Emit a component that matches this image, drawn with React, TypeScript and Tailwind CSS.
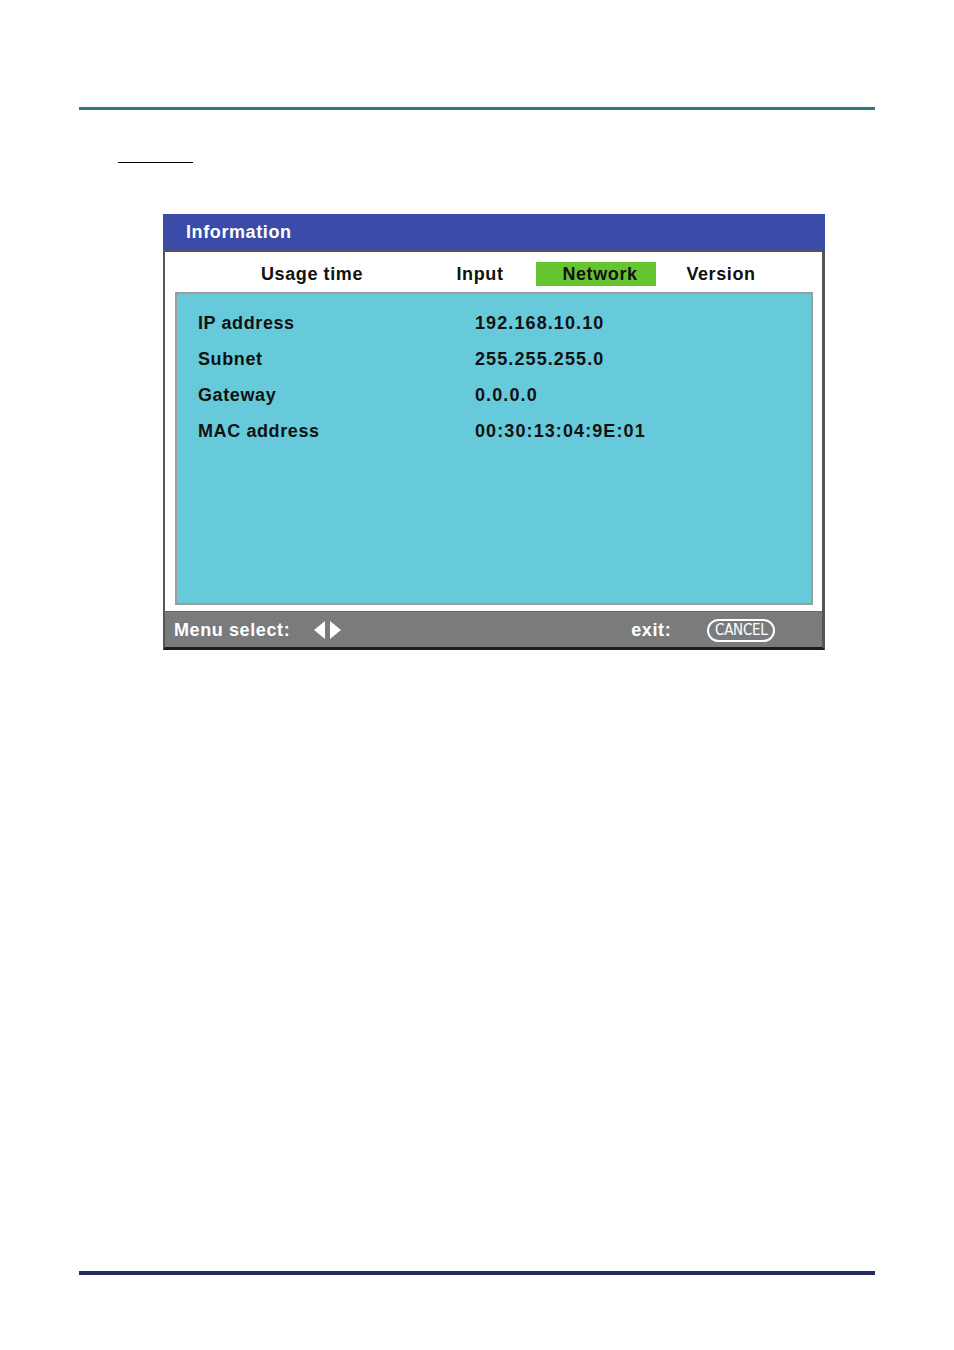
import React from "react";

const rows = [
  { label: "IP address", value: "192.168.10.10" },
  { label: "Subnet", value: "255.255.255.0" },
  { label: "Gateway", value: "0.0.0.0" },
  { label: "MAC address", value: "00:30:13:04:9E:01" },
];

function Arrows() {
  return (
    <svg width="30" height="20" viewBox="0 0 30 20" className="block">
      <polygon points="12,1 12,19 1,10" fill="#fff" />
      <polygon points="17,1 17,19 28,10" fill="#fff" />
    </svg>
  );
}

export default function App() {
  return (
    <div className="w-[954px] h-[1350px] bg-white font-['Liberation_Sans',Arial,sans-serif] font-bold tracking-[0.6px]">
      {/* top rule */}
      <div className="pt-[107px] px-[79px]">
        <div className="h-[3px] bg-[#2e7b78]" />
      </div>

      <div className="ml-[118px] mt-[52px] w-[75px] h-px bg-black" />

      {/* OSD panel */}
      <div className="ml-[163px] mt-[51px] w-[662px]">
        <div className="h-[36px] bg-[#3a4ca8] text-white text-[18px] flex items-center pl-[23px] pt-px">
          Information
        </div>
        <div className="border-l-2 border-r-[3px] border-t-2 border-[#555] border-b-[3px] border-b-[#1c1c1c] bg-white">
          {/* tabs */}
          <div className="h-[40px] flex items-end pb-[6px] text-[18px] text-[#111]">
            <div className="ml-[67px] w-[160px] h-[24px] flex items-center justify-center pt-px">Usage time</div>
            <div className="ml-[48px] w-[80px] h-[24px] flex items-center justify-center pt-px">Input</div>
            <div className="ml-[16px] w-[120px] h-[24px] flex items-center justify-center pl-[8px] pt-px bg-[#66c431]">Network</div>
            <div className="ml-[15px] w-[100px] h-[24px] flex items-center justify-center pt-px">Version</div>
          </div>

          {/* info box */}
          <div className="pl-[10px] pr-[9px] pb-[6px]">
            <div className="h-[313px] border-2 border-[#9c9c9c] bg-[#66cadb] pt-[11px] pl-[21px] text-[18px] text-[#111]">
              {rows.map((r) => (
                <div key={r.label} className="h-[36px] flex items-center">
                  <span className="w-[277px]">{r.label}</span>
                  <span className="tracking-[1.1px]">{r.value}</span>
                </div>
              ))}
            </div>
          </div>

          {/* footer */}
          <div className="h-[36px] bg-[#7a7b7d] border-t border-[#6a6a6a] flex items-center text-white text-[18px] pl-[9px] pt-px">
            <span>Menu select:</span>
            <span className="ml-[23px]">
              <Arrows />
            </span>
            <span className="ml-[288px]">exit:</span>
            <span className="ml-[36px] w-[68px] h-[23px] border-2 border-white rounded-full flex items-center justify-center font-['DejaVu_Sans_Condensed','Liberation_Sans_Narrow',sans-serif] font-normal text-[15px] tracking-[-0.3px]">
              CANCEL
            </span>
          </div>
        </div>
      </div>

      {/* bottom rule */}
      <div className="mt-[621px] px-[79px]">
        <div className="h-[4px] bg-[#222a60]" />
      </div>
    </div>
  );
}
